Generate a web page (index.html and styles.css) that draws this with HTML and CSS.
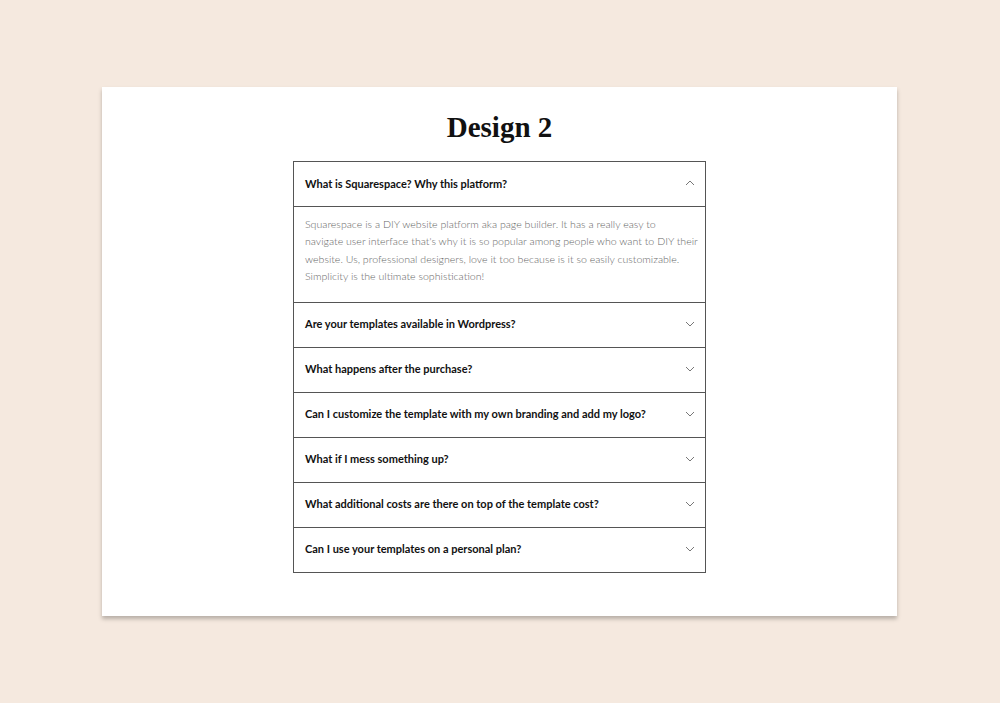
FILE: index.html
```html
<!DOCTYPE html>
<html lang="en">
<head>
    <meta charset="UTF-8">
    <meta name="viewport" content="width=device-width, initial-scale=1.0">
    <title>Design 2 - FAQ</title>
    <link rel="stylesheet" href="styles.css">
</head>
<body>
    <div class="card">
        <h1 class="title">Design 2</h1>

        <div class="faq">
            <div class="faq-item open">
                <div class="faq-question">
                    <span>What is Squarespace? Why this platform?</span>
                    <svg class="chevron" viewBox="0 0 10 6" width="10" height="6"><path d="M1 5 L5 1 L9 5"/></svg>
                </div>
                <div class="faq-answer">
                    Squarespace is a DIY website platform aka page builder. It has a really easy to<br>
                    navigate user interface that's why it is so popular among people who want to DIY their<br>
                    website. Us, professional designers, love it too because is it so easily customizable.<br>
                    Simplicity is the ultimate sophistication!
                </div>
            </div>
            <div class="faq-item">
                <div class="faq-question">
                    <span>Are your templates available in Wordpress?</span>
                    <svg class="chevron" viewBox="0 0 10 6" width="10" height="6"><path d="M1 1 L5 5 L9 1"/></svg>
                </div>
            </div>
            <div class="faq-item">
                <div class="faq-question">
                    <span>What happens after the purchase?</span>
                    <svg class="chevron" viewBox="0 0 10 6" width="10" height="6"><path d="M1 1 L5 5 L9 1"/></svg>
                </div>
            </div>
            <div class="faq-item">
                <div class="faq-question">
                    <span>Can I customize the template with my own branding and add my logo?</span>
                    <svg class="chevron" viewBox="0 0 10 6" width="10" height="6"><path d="M1 1 L5 5 L9 1"/></svg>
                </div>
            </div>
            <div class="faq-item">
                <div class="faq-question">
                    <span>What if I mess something up?</span>
                    <svg class="chevron" viewBox="0 0 10 6" width="10" height="6"><path d="M1 1 L5 5 L9 1"/></svg>
                </div>
            </div>
            <div class="faq-item">
                <div class="faq-question">
                    <span>What additional costs are there on top of the template cost?</span>
                    <svg class="chevron" viewBox="0 0 10 6" width="10" height="6"><path d="M1 1 L5 5 L9 1"/></svg>
                </div>
            </div>
            <div class="faq-item">
                <div class="faq-question">
                    <span>Can I use your templates on a personal plan?</span>
                    <svg class="chevron" viewBox="0 0 10 6" width="10" height="6"><path d="M1 1 L5 5 L9 1"/></svg>
                </div>
            </div>
        </div>
    </div>
</body>
</html>
```

FILE: styles.css
```css
* {
    margin: 0;
    padding: 0;
    box-sizing: border-box;
}

body {
    font-family: 'Lato', 'Liberation Sans', sans-serif;
    background: #f5e9df;
    min-height: 100vh;
    padding: 87px 0 0 102px;
}

.card {
    background: white;
    width: 795px;
    height: 529px;
    box-shadow: 0 3px 4px rgba(0, 0, 0, 0.25);
    display: flex;
    flex-direction: column;
    align-items: center;
    padding-top: 24px;
}

.title {
    font-family: 'Liberation Serif', serif;
    font-weight: 700;
    font-size: 29px;
    line-height: 32px;
    color: #111;
    margin-bottom: 18px;
}

.faq {
    width: 413px;
    border: 1px solid #555;
}

.faq-item + .faq-item {
    border-top: 1px solid #555;
}

.faq-question {
    height: 44px;
    display: flex;
    align-items: center;
    justify-content: space-between;
    padding: 0 10px 2px 11px;
    font-size: 11px;
    font-weight: 700;
    color: #111;
}

.chevron {
    fill: none;
    stroke: #777;
    stroke-width: 1;
}

.faq-answer {
    border-top: 1px solid #555;
    padding: 9px 0 16px 11px;
    font-size: 10.6px;
    font-weight: 300;
    line-height: 17.4px;
    color: #666;
    white-space: nowrap;
}
```
